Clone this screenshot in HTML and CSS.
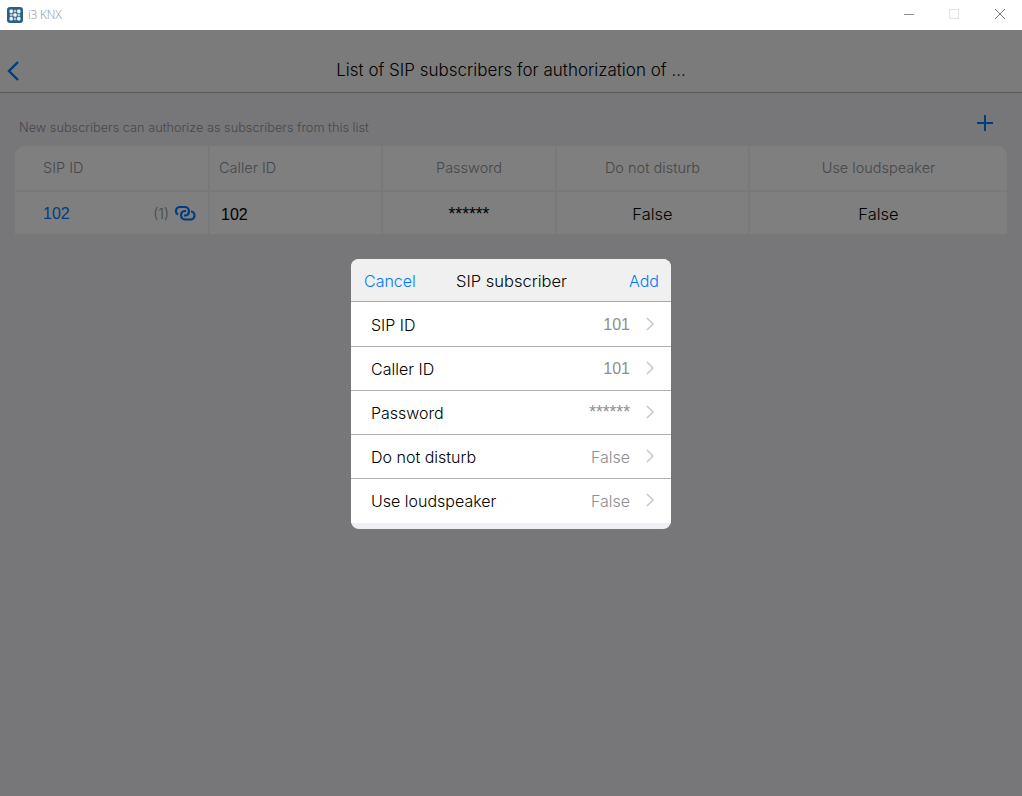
FILE: index.html
```html
<!DOCTYPE html>
<html lang="en">
<head>
<meta charset="utf-8">
<title>i3 KNX</title>
<link rel="stylesheet" href="styles.css">
</head>
<body>
<header class="titlebar">
  <div class="app-id">
    <svg class="app-logo" width="16" height="16" viewBox="0 0 16 16"><rect width="16" height="16" rx="3" fill="#2a5f87"/><g fill="#eef2f5"><rect x="2.500" y="2.500" width="3.400" height="3.400" rx="1"/><rect x="6.600" y="2.800" width="2.800" height="2.800" rx="1" opacity=".7"/><rect x="10.100" y="2.500" width="3.400" height="3.400" rx="1"/><rect x="2.800" y="6.600" width="2.800" height="2.800" rx="1" opacity=".7"/><rect x="6.300" y="6.300" width="3.400" height="3.400" rx="1"/><rect x="10.400" y="6.600" width="2.800" height="2.800" rx="1" opacity=".7"/><rect x="2.500" y="10.100" width="3.400" height="3.400" rx="1"/><rect x="6.600" y="10.400" width="2.800" height="2.800" rx="1" opacity=".7"/><rect x="10.100" y="10.100" width="3.400" height="3.400" rx="1"/></g></svg>
    <span class="app-name">i3 KNX</span>
  </div>
  <div class="win-controls">
    <svg class="win-btn" width="46" height="30" viewBox="0 0 46 30"><path d="M20 14.500h10" stroke="#8c8c8c" fill="none"/></svg>
    <svg class="win-btn" width="46" height="30" viewBox="0 0 46 30"><rect x="19.500" y="9.500" width="9" height="9" stroke="#e2e2e2" fill="none"/></svg>
    <svg class="win-btn" width="46" height="30" viewBox="0 0 46 30"><path d="M19 9l10 10M29 9L19 19" stroke="#7a7a7a" fill="none"/></svg>
  </div>
</header>
<div class="app">
  <nav class="navbar">
    <svg class="back" width="14" height="22" viewBox="0 0 14 22"><path d="M12 2L3 11l9 9" stroke="#007aff" stroke-width="2.400" fill="none"/></svg>
    <h1 class="nav-title">List of SIP subscribers for authorization of ...</h1>
  </nav>
  <div class="content">
    <div class="caption-row">
      <p class="caption">New subscribers can authorize as subscribers from this list</p>
      <svg class="add" width="16" height="16" viewBox="0 0 16 16"><path d="M8 0v16M0 8h16" stroke="#007aff" stroke-width="2" fill="none"/></svg>
    </div>
    <div class="table">
      <div class="cell head left c1">SIP ID</div>
      <div class="cell head left">Caller ID</div>
      <div class="cell head">Password</div>
      <div class="cell head">Do not disturb</div>
      <div class="cell head">Use loudspeaker</div>
      <div class="cell body id c1">
        <span class="link num">102</span>
        <span class="count">(1)
          <svg class="chain" width="22" height="17" viewBox="0 0 22 17"><path d="M4 9.500A4 4 0 0 1 6 2h5a4.300 4.300 0 0 1 .5 8.500H10" stroke="#007aff" stroke-width="2.200" fill="none"/><path d="M17 6.500a4 4 0 0 1-1 8h-5A4.300 4.300 0 0 1 10.500 6H12" stroke="#007aff" stroke-width="2.200" fill="none"/></svg>
        </span>
      </div>
      <div class="cell body left num">102</div>
      <div class="cell body stars">******</div>
      <div class="cell body">False</div>
      <div class="cell body">False</div>
    </div>
  </div>
  <div class="overlay"></div>
  <section class="modal">
    <div class="modal-head">
      <span class="modal-action">Cancel</span>
      <span class="modal-title">SIP subscriber</span>
      <span class="modal-action end">Add</span>
    </div>
    <ul class="form">
      <li class="form-row"><span class="label">SIP ID</span><span class="value num">101</span><svg class="chev" width="8" height="14" viewBox="0 0 8 14"><path d="M1 1l6 6-6 6" stroke="#c7c7cc" stroke-width="1.500" fill="none"/></svg></li>
      <li class="form-row"><span class="label">Caller ID</span><span class="value num">101</span><svg class="chev" width="8" height="14" viewBox="0 0 8 14"><path d="M1 1l6 6-6 6" stroke="#c7c7cc" stroke-width="1.500" fill="none"/></svg></li>
      <li class="form-row"><span class="label">Password</span><span class="value stars">******</span><svg class="chev" width="8" height="14" viewBox="0 0 8 14"><path d="M1 1l6 6-6 6" stroke="#c7c7cc" stroke-width="1.500" fill="none"/></svg></li>
      <li class="form-row"><span class="label">Do not disturb</span><span class="value">False</span><svg class="chev" width="8" height="14" viewBox="0 0 8 14"><path d="M1 1l6 6-6 6" stroke="#c7c7cc" stroke-width="1.500" fill="none"/></svg></li>
      <li class="form-row"><span class="label">Use loudspeaker</span><span class="value">False</span><svg class="chev" width="8" height="14" viewBox="0 0 8 14"><path d="M1 1l6 6-6 6" stroke="#c7c7cc" stroke-width="1.500" fill="none"/></svg></li>
    </ul>
  </section>
</div>
</body>
</html>
```
FILE: styles.css
```css
* { box-sizing: border-box; }
html, body { margin: 0; height: 100%; overflow: hidden; }
body {
  display: flex;
  flex-direction: column;
  font-family: Inter, "Liberation Sans", Arial, sans-serif;
  font-weight: 300;
  color: #000;
  background: #efeff4;
}
.titlebar {
  height: 30px;
  flex: none;
  display: flex;
  justify-content: space-between;
  align-items: center;
  background: #fff;
}
.app-id { display: flex; align-items: center; padding-left: 7px; gap: 5px; }
.app-logo { display: block; }
.app-name { font: 300 12px "Open Sans", sans-serif; color: #8a8f96; margin-top: -2px; letter-spacing: -.2px; }
.win-controls { display: flex; }
.win-btn { display: block; }
.app { position: relative; flex: 1; }
.navbar {
  height: 63px;
  display: flex;
  align-items: center;
  justify-content: center;
  padding-top: 18px;
  position: relative;
  background: #f7f7f8;
  border-bottom: 1px solid #b2b2b2;
}
.back { position: absolute; left: 6px; top: 30px; }
.nav-title { margin: 0; font-size: 17px; font-weight: 300; }
.content { padding: 0 15px; }
.caption-row { height: 53px; display: flex; justify-content: space-between; align-items: flex-start; padding: 22px 14px 0 4px; }
.caption { margin: 5px 0 0; font-size: 12.750px; color: #8e8e93; }
.table {
  display: grid;
  grid-template-columns: 195px 173px 174px 193px 257px;
  grid-template-rows: 46px 42px;
  border-radius: 10px 10px 0 0;
  overflow: hidden;
}
.cell {
  display: flex;
  align-items: center;
  justify-content: center;
  background: #fff;
  font-size: 16.500px;
  border-right: 2px solid #f2f2f5;
}
.cell:nth-child(5n) { border-right: 0; }
.head { color: #8e8e93; font-size: 14.500px; border-bottom: 2px solid #f2f2f5; padding-bottom: 2px; }
.body { padding-top: 2px; }
.left { justify-content: flex-start; padding-left: 10px; }
.head.left { padding-left: 9px; }
.c1.head { justify-content: flex-start; padding-left: 28px; }
.id { justify-content: space-between; padding: 0 12px 0 28px; }
.num { font-family: "Liberation Sans", Arial, sans-serif; font-weight: 400; font-size: 16px; }
.body.num { padding-top: 4px; padding-left: 11px; }
.link { margin-top: 2px; }
.stars { font-family: "Liberation Sans", Arial, sans-serif; font-weight: 400; font-size: 17.500px; }
.link { color: #007aff; }
.count { display: flex; align-items: center; gap: 5px; color: #8e8e93; font-size: 14.500px; }
.chain { display: block; }
.overlay { position: absolute; inset: 0; background: rgba(0, 0, 0, .5); }
.modal {
  position: absolute;
  left: 351px;
  top: 229px;
  width: 320px;
  height: 270px;
  border-radius: 8px;
  overflow: hidden;
  background: #efeff4;
}
.modal-head {
  height: 43px;
  display: grid;
  grid-template-columns: 1fr auto 1fr;
  align-items: center;
  padding: 1px 12px 0 13px;
  background: #f0f0f0;
  border-bottom: 1px solid #a8a8a8;
  font-size: 16px;
}
.modal-title { font-size: 16.500px; }
.modal-action { color: #007aff; }
.end { text-align: right; }
.form { list-style: none; margin: 0; padding: 1px 0 0; background: #fff; }
.form-row {
  height: 44px;
  display: flex;
  align-items: center;
  padding: 0 17px 0 20px;
  background: #fff;
  border-bottom: 1px solid #b0b0b0;
  font-size: 16px;
}
.form-row:last-child { border-bottom: 0; }
.label { flex: 1; }
.value { color: #8e8e93; }
.chev { display: block; margin-left: 16px; margin-top: -2px; }
```
